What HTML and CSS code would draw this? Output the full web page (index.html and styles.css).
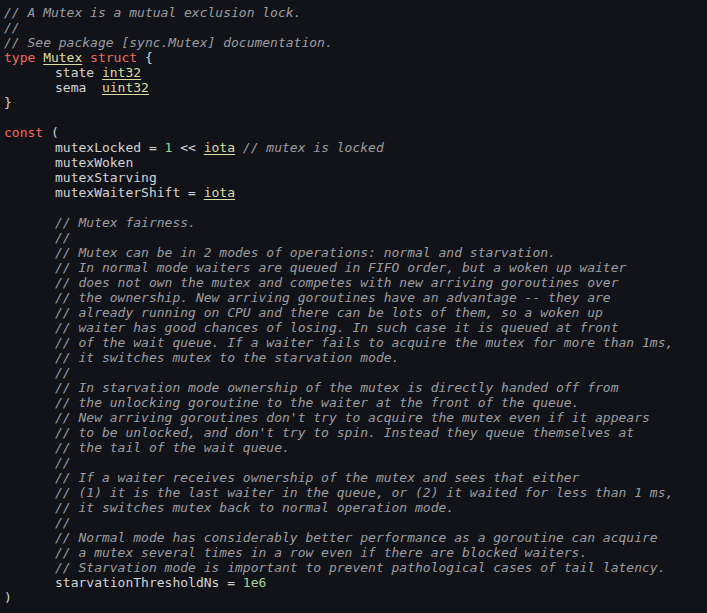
FILE: index.html
```html
<!DOCTYPE html>
<html>
<head>
<meta charset="utf-8">
<link rel="stylesheet" href="styles.css">
</head>
<body>
<pre class="code"><span class="c">// A Mutex is a mutual exclusion lock.</span>
<span class="c">//</span>
<span class="c">// See package [sync.Mutex] documentation.</span>
<span class="k">type</span> <span class="t">Mutex</span> <span class="k">struct</span> {
	state <span class="t">int32</span>
	sema  <span class="t">uint32</span>
}

<span class="k">const</span> (
	mutexLocked = <span class="n">1</span> &lt;&lt; <span class="t">iota</span> <span class="c">// mutex is locked</span>
	mutexWoken
	mutexStarving
	mutexWaiterShift = <span class="t">iota</span>

	<span class="c">// Mutex fairness.</span>
	<span class="c">//</span>
	<span class="c">// Mutex can be in 2 modes of operations: normal and starvation.</span>
	<span class="c">// In normal mode waiters are queued in FIFO order, but a woken up waiter</span>
	<span class="c">// does not own the mutex and competes with new arriving goroutines over</span>
	<span class="c">// the ownership. New arriving goroutines have an advantage -- they are</span>
	<span class="c">// already running on CPU and there can be lots of them, so a woken up</span>
	<span class="c">// waiter has good chances of losing. In such case it is queued at front</span>
	<span class="c">// of the wait queue. If a waiter fails to acquire the mutex for more than 1ms,</span>
	<span class="c">// it switches mutex to the starvation mode.</span>
	<span class="c">//</span>
	<span class="c">// In starvation mode ownership of the mutex is directly handed off from</span>
	<span class="c">// the unlocking goroutine to the waiter at the front of the queue.</span>
	<span class="c">// New arriving goroutines don't try to acquire the mutex even if it appears</span>
	<span class="c">// to be unlocked, and don't try to spin. Instead they queue themselves at</span>
	<span class="c">// the tail of the wait queue.</span>
	<span class="c">//</span>
	<span class="c">// If a waiter receives ownership of the mutex and sees that either</span>
	<span class="c">// (1) it is the last waiter in the queue, or (2) it waited for less than 1 ms,</span>
	<span class="c">// it switches mutex back to normal operation mode.</span>
	<span class="c">//</span>
	<span class="c">// Normal mode has considerably better performance as a goroutine can acquire</span>
	<span class="c">// a mutex several times in a row even if there are blocked waiters.</span>
	<span class="c">// Starvation mode is important to prevent pathological cases of tail latency.</span>
	starvationThresholdNs = <span class="n">1e6</span>
)</pre>
</body>
</html>
```

FILE: styles.css
```css
html, body {
  margin: 0;
  padding: 0;
  background: #121318;
}
body {
  width: 707px;
  height: 613px;
  overflow: hidden;
}
.code {
  margin: 0;
  padding: 5px 4px;
  font-family: "DejaVu Sans Mono", monospace;
  font-size: 13px;
  line-height: 15px;
  color: #d2d3d6;
  tab-size: 51px;
  -moz-tab-size: 51px;
  white-space: pre;
}
.c {
  color: #9c9da1;
  font-style: italic;
}
.k {
  color: #ef6b5c;
}
.t {
  color: #dcdd9f;
  text-decoration: underline;
  text-underline-offset: 2px;
}
.n {
  color: #a3d38f;
}
```
